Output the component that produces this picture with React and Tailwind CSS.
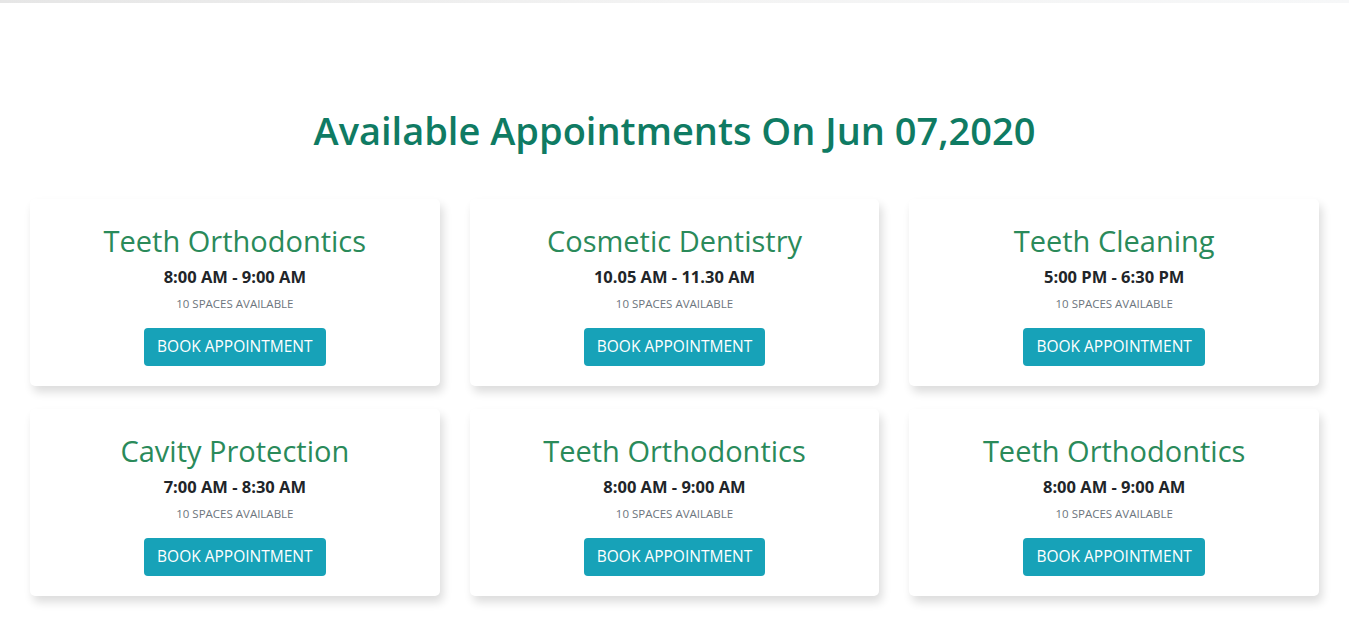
import React from "react";

const appointments = [
  { id: 1, title: "Teeth Orthodontics", time: "8:00 AM - 9:00 AM", spaces: 10 },
  { id: 2, title: "Cosmetic Dentistry", time: "10.05 AM - 11.30 AM", spaces: 10 },
  { id: 3, title: "Teeth Cleaning", time: "5:00 PM - 6:30 PM", spaces: 10 },
  { id: 4, title: "Cavity Protection", time: "7:00 AM - 8:30 AM", spaces: 10 },
  { id: 5, title: "Teeth Orthodontics", time: "8:00 AM - 9:00 AM", spaces: 10 },
  { id: 6, title: "Teeth Orthodontics", time: "8:00 AM - 9:00 AM", spaces: 10 },
];

const AppointmentCard = ({ appointment }) => {
  return (
    <div className="px-[15px] mb-[23px]">
      <div className="bg-white rounded-[5px] shadow-[3px_6px_10px_rgba(0,0,0,0.14)] pt-[24px] pb-[20px] flex flex-col items-center text-center">
        <h3 className="text-[29px] leading-[36px] text-[#2a8a5a]">
          {appointment.title}
        </h3>
        <p className="mt-[8px] text-[16.5px] leading-[20px] font-bold text-[#212529]">
          {appointment.time}
        </p>
        <p className="mt-[9px] text-[11.5px] leading-[16px] uppercase text-[#6c757d]">
          {appointment.spaces} Spaces Available
        </p>
        <button className="mt-[16px] h-[38px] px-[13px] rounded-[4px] bg-[#17a2b8] text-white text-[15.5px] uppercase">
          Book Appointment
        </button>
      </div>
    </div>
  );
};

const App = () => {
  return (
    <div className="min-h-screen bg-white font-['Open_Sans',sans-serif]">
      <div className="h-[3px] bg-gradient-to-r from-[#e6e6e6] via-[#f3f3f3] to-[#f6f7f8]" />
      <section className="px-[15px] pt-[102px]">
        <h1 className="text-center text-[38px] leading-[50px] font-semibold text-[#0f7b63]">
          Available Appointments On Jun 07,2020
        </h1>
        <div className="grid grid-cols-3 mt-[44px]">
          {appointments.map((a) => (
            <AppointmentCard key={a.id} appointment={a} />
          ))}
        </div>
      </section>
    </div>
  );
};

export default App;
